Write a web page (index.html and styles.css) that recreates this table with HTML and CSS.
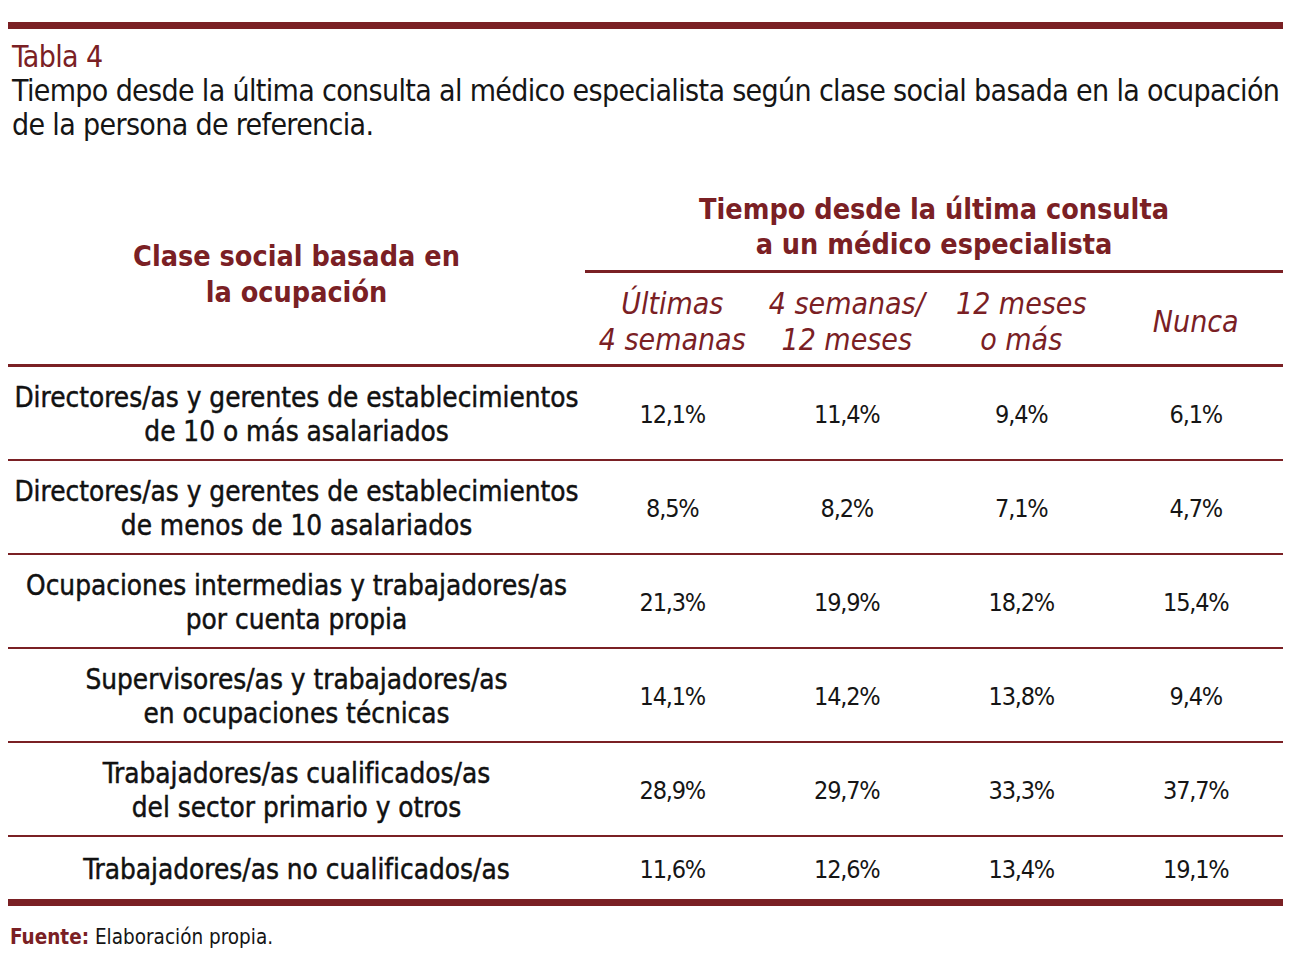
FILE: index.html
```html
<!DOCTYPE html>
<html lang="es">
<head>
<meta charset="utf-8">
<title>Tabla 4</title>
<link rel="stylesheet" href="styles.css">
</head>
<body>
<div class="page">
  <div class="bar"></div>
  <div class="caption">
    <div class="label">Tabla 4</div>
    <div class="title">Tiempo desde la última consulta al médico especialista según clase social basada en la ocupación<br>de la persona de referencia.</div>
  </div>
  <table class="data">
    <colgroup>
      <col class="c-first">
      <col class="c-num"><col class="c-num"><col class="c-num"><col class="c-num">
    </colgroup>
    <thead>
      <tr>
        <th class="h-class" rowspan="2">Clase social basada en<br>la ocupación</th>
        <th class="h-group" colspan="4">Tiempo desde la última consulta<br>a un médico especialista</th>
      </tr>
      <tr class="sub">
        <th>Últimas<br>4 semanas</th>
        <th>4 semanas/<br>12 meses</th>
        <th>12 meses<br>o más</th>
        <th>Nunca</th>
      </tr>
    </thead>
    <tbody>
      <tr><td class="lab">Directores/as y gerentes de establecimientos<br>de 10 o más asalariados</td><td>12,1%</td><td>11,4%</td><td>9,4%</td><td>6,1%</td></tr>
      <tr><td class="lab">Directores/as y gerentes de establecimientos<br>de menos de 10 asalariados</td><td>8,5%</td><td>8,2%</td><td>7,1%</td><td>4,7%</td></tr>
      <tr><td class="lab">Ocupaciones intermedias y trabajadores/as<br>por cuenta propia</td><td>21,3%</td><td>19,9%</td><td>18,2%</td><td>15,4%</td></tr>
      <tr><td class="lab">Supervisores/as y trabajadores/as<br>en ocupaciones técnicas</td><td>14,1%</td><td>14,2%</td><td>13,8%</td><td>9,4%</td></tr>
      <tr><td class="lab">Trabajadores/as cualificados/as<br>del sector primario y otros</td><td>28,9%</td><td>29,7%</td><td>33,3%</td><td>37,7%</td></tr>
      <tr class="last"><td class="lab">Trabajadores/as no cualificados/as</td><td>11,6%</td><td>12,6%</td><td>13,4%</td><td>19,1%</td></tr>
    </tbody>
  </table>
  <div class="bar"></div>
  <div class="source"><span class="src-key">Fuente:</span> Elaboración propia.</div>
</div>
</body>
</html>
```

FILE: styles.css
```css
html, body {
  margin: 0;
  padding: 0;
  background: #ffffff;
}

body {
  font-family: "DejaVu Sans", sans-serif;
  font-stretch: condensed;
  color: #151515;
}

.page {
  width: 1275px;
  margin-left: 8px;
  padding-top: 22px;
}

.bar {
  height: 7px;
  background: #7a2024;
}

.caption {
  padding: 11px 0 0 4px;
  font-size: 30px;
  line-height: 34px;
  letter-spacing: -0.65px;
  white-space: nowrap;
}

.label {
  color: #7a2024;
}

.title {
  color: #151515;
}

.data {
  width: 100%;
  border-collapse: collapse;
  margin-top: 39px;
}

.c-first { width: 577px; }
.c-num { width: 174.5px; }

.data th {
  color: #7a2024;
  font-weight: bold;
  text-align: center;
  padding: 0;
}

.h-class {
  font-size: 28.5px;
  line-height: 36px;
  vertical-align: middle;
  border-bottom: 3px solid #7a2024;
  padding: 4px 0 0 0 !important;
}

.h-group {
  font-size: 28.5px;
  line-height: 35px;
  border-bottom: 3px solid #7a2024;
  height: 81px;
  vertical-align: bottom;
  padding-bottom: 8px !important;
}

.sub th {
  font-style: italic;
  font-weight: normal;
  font-size: 30px;
  line-height: 36px;
  height: 85px;
  vertical-align: middle;
  border-bottom: 3px solid #7a2024;
  padding-top: 6px;
}

.data td {
  font-size: 25px;
  letter-spacing: -1.2px;
  line-height: 34px;
  text-align: center;
  vertical-align: middle;
  height: 88px;
  padding: 4px 0 0 0;
  border-bottom: 2px solid #7a2024;
  color: #151515;
}

.data td.lab {
  font-size: 27.7px;
  letter-spacing: 0;
  color: #111111;
  -webkit-text-stroke: 0.45px #111111;
}

.data tr.last td {
  height: 58px;
  border-bottom: none;
}

.source {
  padding: 18px 0 0 2px;
  font-size: 20.5px;
  line-height: 26px;
  color: #151515;
}

.src-key {
  color: #7a2024;
  font-weight: bold;
}
```
